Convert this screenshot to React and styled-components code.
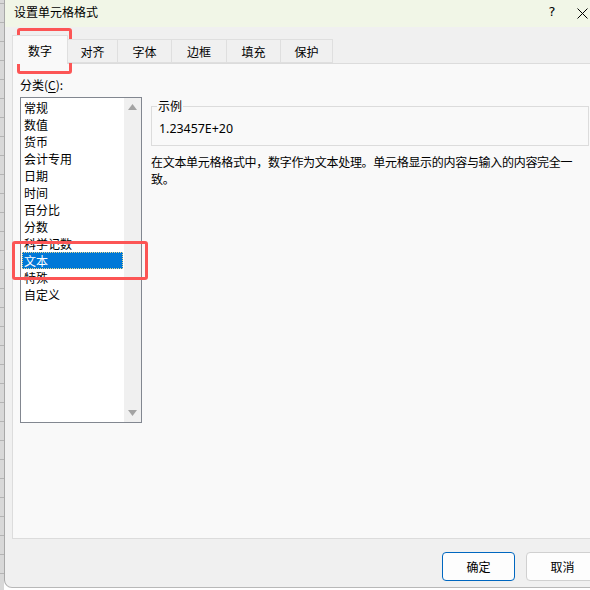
import React from "react";
import styled, { createGlobalStyle } from "styled-components";

const Global = createGlobalStyle`
  html, body { margin: 0; padding: 0; overflow: hidden; background: #fff; }
  * { box-sizing: border-box; }
`;

const CJK = `"Noto Sans CJK SC", "Noto Sans", sans-serif`;

const Screen = styled.div`
  position: relative;
  width: 590px;
  height: 590px;
  display: flex;
  overflow: hidden;
  background: #ffffff;
  font-family: ${CJK};
  font-size: 12px;
  color: #000;
`;

const SheetStrip = styled.div`
  width: 4px;
  flex: none;
  height: 590px;
  background: repeating-linear-gradient(
    to bottom,
    #d8d8d8 0px,
    #d8d8d8 18px,
    #b4b4b4 18px,
    #b4b4b4 19px
  );
  background-position: 0 -15px;
`;

const Dialog = styled.div`
  flex: 1;
  height: 588px;
  display: flex;
  flex-direction: column;
  background: #f0f0f0;
  border-left: 1px solid #a8a8a8;
  border-bottom: 1px solid #b8b8b8;
  border-bottom-left-radius: 8px;
  overflow: hidden;
`;

const TitleBar = styled.div`
  height: 27px;
  flex: none;
  display: flex;
  align-items: center;
  padding-left: 9px;
  background: #f1f6e7;
`;

const Title = styled.div`
  flex: 1;
  font-size: 12px;
  line-height: 16px;
  margin-top: -3px;
`;

const TitleButton = styled.div`
  width: ${(p) => p.$w}px;
  height: 27px;
  display: flex;
  align-items: center;
  justify-content: center;
  font-family: "DejaVu Sans", sans-serif;
  font-size: 13px;
  margin-top: -4px;
`;

const Body = styled.div`
  flex: 1;
  display: flex;
  flex-direction: column;
  padding: 8px 0 0 7px;
`;

const TabRow = styled.div`
  height: 28px;
  display: flex;
  align-items: flex-end;
  position: relative;
  z-index: 1;
`;

const Tab = styled.div`
  width: ${(p) => p.$w}px;
  height: ${(p) => (p.$active ? 29 : 24)}px;
  margin-bottom: ${(p) => (p.$active ? -1 : 0)}px;
  display: flex;
  align-items: center;
  justify-content: center;
  background: ${(p) => (p.$active ? "#f9f9f9" : "#f0f0f0")};
  border: 1px solid #dfdfdf;
  border-bottom: ${(p) => (p.$active ? "none" : "1px solid #dfdfdf")};
  border-left: ${(p) => (p.$first ? "1px solid #dfdfdf" : "none")};
  font-size: 12px;
`;

const Panel = styled.div`
  height: 476px;
  display: flex;
  gap: 9px;
  padding: 12px 0 0 7px;
  background: #f9f9f9;
  border: 1px solid #dcdcdc;
  border-right: none;
`;

const LeftColumn = styled.div`
  width: 122px;
  flex: none;
  display: flex;
  flex-direction: column;
`;

const FieldLabel = styled.div`
  line-height: 17px;
  height: 17px;
  margin-bottom: 4px;
  u { text-decoration: underline; text-underline-offset: 2px; }
`;

const ListBox = styled.div`
  height: 326px;
  display: flex;
  border: 1px solid #828790;
  background: #ffffff;
`;

const Items = styled.div`
  flex: 1;
  padding: 1px;
  display: flex;
  flex-direction: column;
`;

const Item = styled.div`
  height: 17px;
  line-height: 17px;
  padding-left: 2px;
  white-space: nowrap;
  background: ${(p) => (p.$selected ? "#0078d7" : "transparent")};
  color: ${(p) => (p.$selected ? "#ffffff" : "#000000")};
  outline: ${(p) => (p.$selected ? "1px dotted #e8d890" : "none")};
  outline-offset: -1px;
`;

const ScrollBar = styled.div`
  width: 17px;
  flex: none;
  background: #f0f0f0;
  display: flex;
  flex-direction: column;
  justify-content: space-between;
  align-items: center;
  padding: 6px 0 6px;
`;

const Arrow = styled.svg`
  width: 9px;
  height: 6px;
  display: block;
`;

const RightColumn = styled.div`
  flex: 1;
  padding-top: 22px;
  display: flex;
  flex-direction: column;
`;

const Sample = styled.fieldset`
  margin: 0 1px 0 0;
  padding: 7px 6px 5px 7px;
  border: 1px solid #dcdcdc;
  height: 48px;
  legend {
    padding: 0 1px;
    margin-left: -2px;
    line-height: 16px;
    font-size: 12px;
  }
`;

const SampleValue = styled.div`
  font-family: "Noto Sans", sans-serif;
  font-size: 12.4px;
  line-height: 16px;
`;

const Description = styled.p`
  margin: 7px 0 0 0;
  width: 432px;
  font-size: 12px;
  letter-spacing: -0.3px;
  line-height: 17px;
`;

const ButtonRow = styled.div`
  display: flex;
  justify-content: flex-end;
  gap: 11px;
  margin-top: 13px;
  margin-right: -9px;
`;

const Button = styled.div`
  width: 73px;
  height: 29px;
  display: flex;
  align-items: center;
  justify-content: center;
  background: #fdfdfd;
  border-radius: 4px;
  border: ${(p) => (p.$primary ? "1.5px solid #0067c0" : "1px solid #d0d0d0")};
  font-size: 12px;
`;

const Highlight = styled.div`
  position: absolute;
  left: ${(p) => p.$x}px;
  top: ${(p) => p.$y}px;
  width: ${(p) => p.$w}px;
  height: ${(p) => p.$h}px;
  border: 3px solid #fc5555;
  border-radius: 3px;
  pointer-events: none;
`;

const tabs = [
  ["数字", 56],
  ["对齐", 50],
  ["字体", 54],
  ["边框", 55],
  ["填充", 54],
  ["保护", 52],
];

const items = [
  "常规",
  "数值",
  "货币",
  "会计专用",
  "日期",
  "时间",
  "百分比",
  "分数",
  "科学记数",
  "文本",
  "特殊",
  "自定义",
];

export default function App() {
  return (
    <>
      <Global />
      <Screen>
        <SheetStrip />
        <Dialog>
          <TitleBar>
            <Title>设置单元格格式</Title>
            <TitleButton $w={44}>?</TitleButton>
            <TitleButton $w={16}>
              <svg width="11" height="11" viewBox="0 0 11 11" style={{ marginTop: 4 }}>
                <path d="M0.5 0.5 L10.5 10.5 M10.5 0.5 L0.5 10.5" stroke="#000" strokeWidth="1" fill="none" />
              </svg>
            </TitleButton>
          </TitleBar>
          <Body>
            <TabRow>
              {tabs.map(([label, w], i) => (
                <Tab key={label} $w={w} $active={i === 0} $first={i === 0}>
                  {label}
                </Tab>
              ))}
            </TabRow>
            <Panel>
              <LeftColumn>
                <FieldLabel>
                  分类(<u>C</u>):
                </FieldLabel>
                <ListBox>
                  <Items>
                    {items.map((it) => (
                      <Item key={it} $selected={it === "文本"}>
                        {it}
                      </Item>
                    ))}
                  </Items>
                  <ScrollBar>
                    <Arrow viewBox="0 0 9 6">
                      <path d="M0 6 L4.5 0 L9 6 Z" fill="#a3a3a3" />
                    </Arrow>
                    <Arrow viewBox="0 0 9 6">
                      <path d="M0 0 L4.5 6 L9 0 Z" fill="#a3a3a3" />
                    </Arrow>
                  </ScrollBar>
                </ListBox>
              </LeftColumn>
              <RightColumn>
                <Sample>
                  <legend>示例</legend>
                  <SampleValue>1.23457E+20</SampleValue>
                </Sample>
                <Description>
                  在文本单元格格式中，数字作为文本处理。单元格显示的内容与输入的内容完全一致。
                </Description>
              </RightColumn>
            </Panel>
            <ButtonRow>
              <Button $primary>确定</Button>
              <Button>取消</Button>
            </ButtonRow>
          </Body>
        </Dialog>
        <Highlight $x={17} $y={28} $w={55} $h={46} />
        <Highlight $x={12} $y={241} $w={136} $h={39} />
      </Screen>
    </>
  );
}
